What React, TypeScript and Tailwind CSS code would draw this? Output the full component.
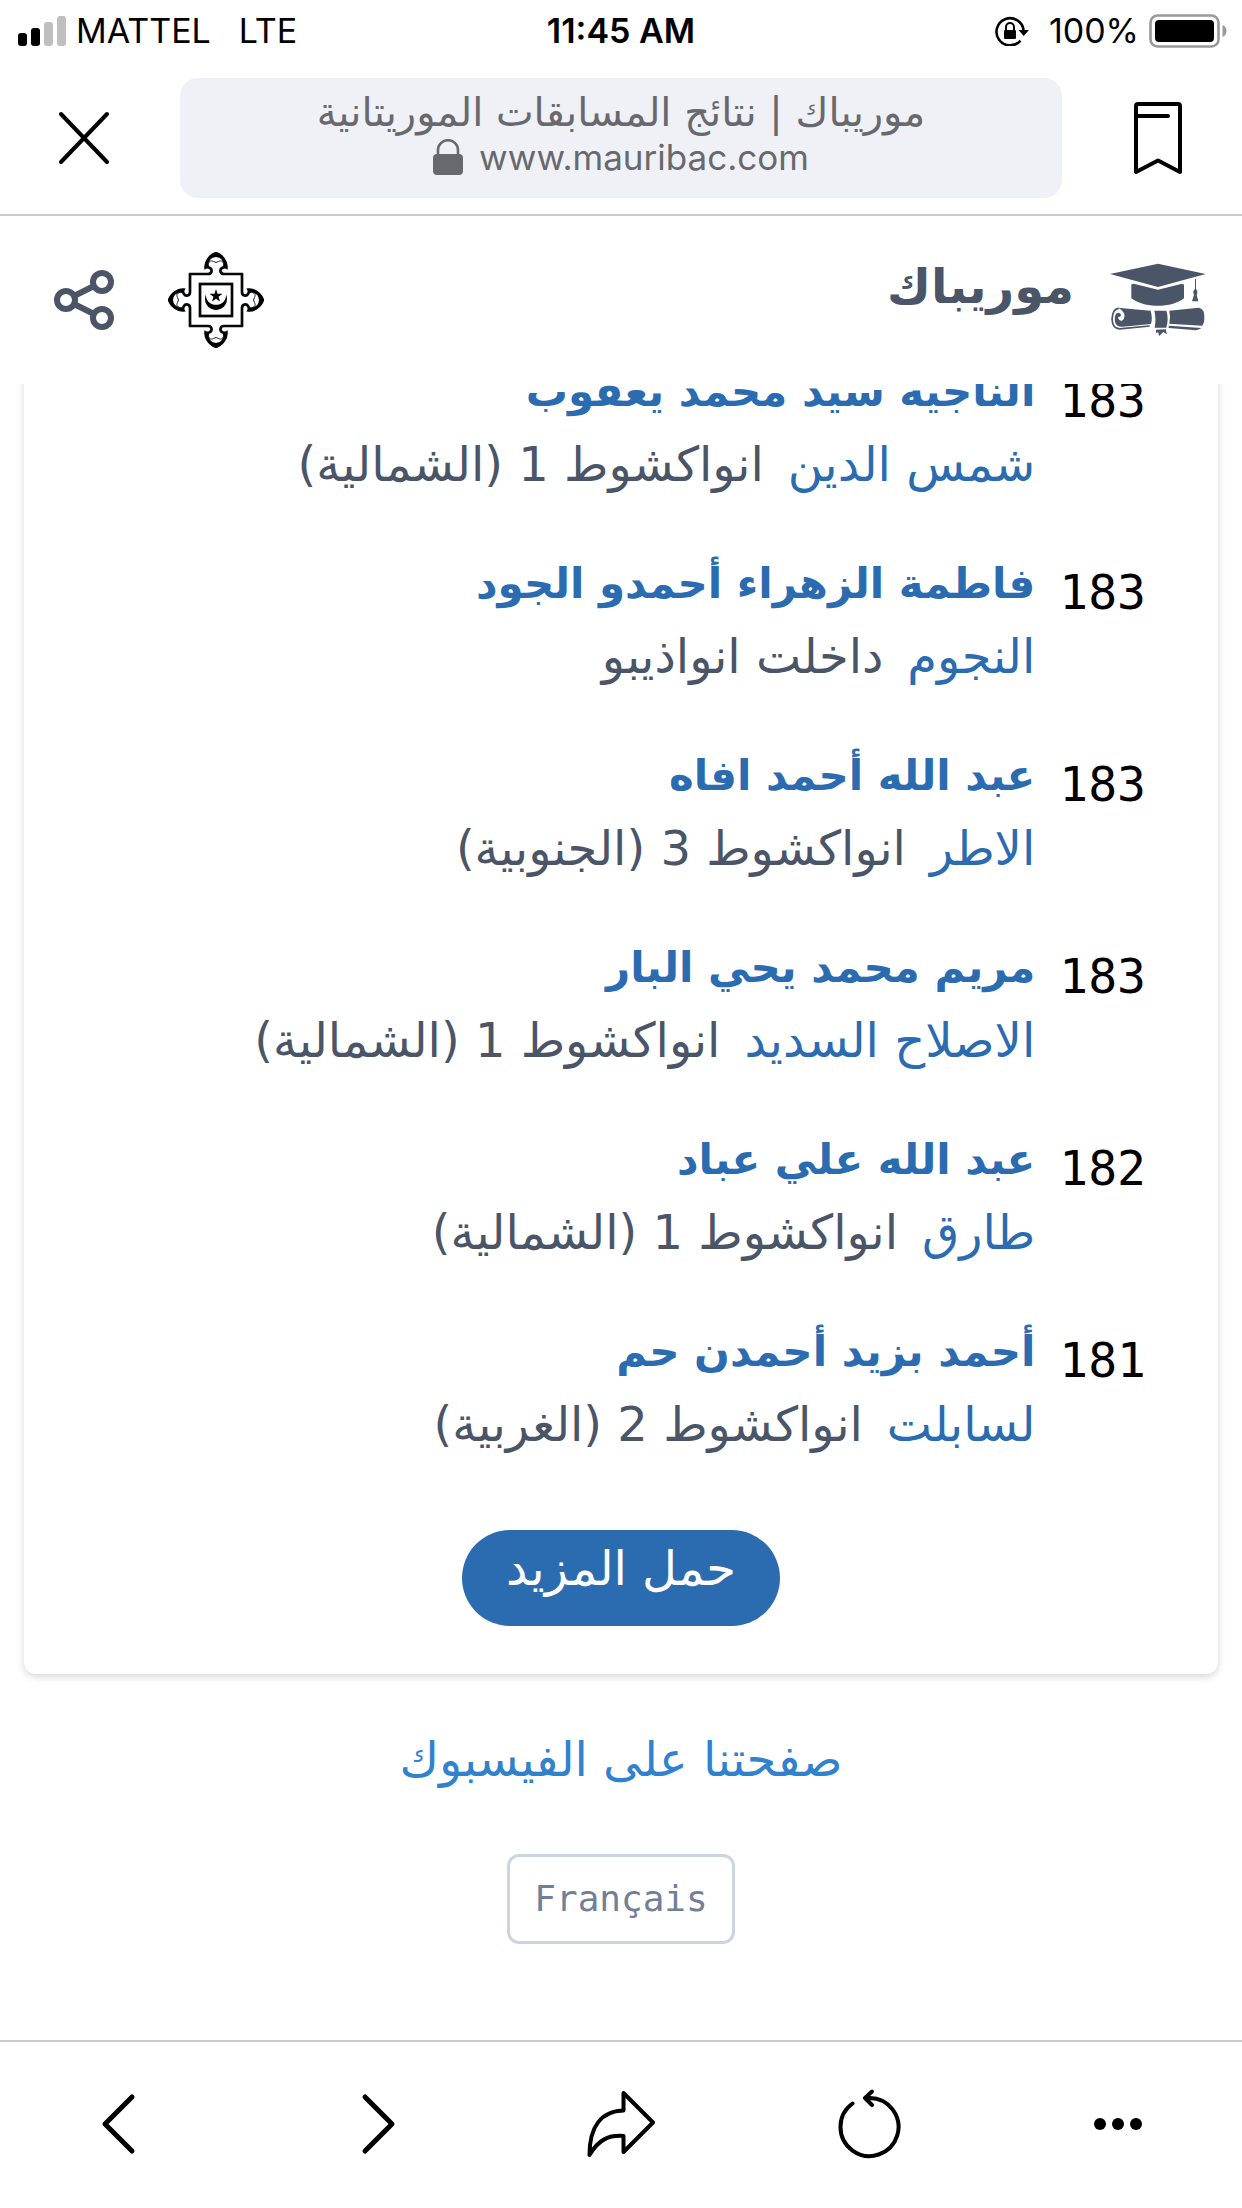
const results = [
  { score: 183, name: "الناجيه سيد محمد يعقوب", school: "شمس الدين", region: "انواكشوط 1 (الشمالية)" },
  { score: 183, name: "فاطمة الزهراء أحمدو الجود", school: "النجوم", region: "داخلت انواذيبو" },
  { score: 183, name: "عبد الله أحمد افاه", school: "الاطر", region: "انواكشوط 3 (الجنوبية)" },
  { score: 183, name: "مريم محمد يحي البار", school: "الاصلاح السديد", region: "انواكشوط 1 (الشمالية)" },
  { score: 182, name: "عبد الله علي عباد", school: "طارق", region: "انواكشوط 1 (الشمالية)" },
  { score: 181, name: "أحمد بزيد أحمدن حم", school: "لسابلت", region: "انواكشوط 2 (الغربية)" },
];

function StatusBar() {
  return (
    <div className="grid h-[62px] shrink-0 grid-cols-3 items-center px-[15px] text-[34px] leading-none text-black">
      <div className="flex items-center gap-[10px] pl-[3px]">
        <svg width="48" height="30" viewBox="0 0 48 30" aria-hidden="true">
          <rect x="0" y="17" width="9" height="13" rx="3" />
          <rect x="13" y="12" width="9" height="18" rx="3" />
          <rect x="26" y="6" width="9" height="24" rx="3" fill="#bfbfbf" />
          <rect x="39" y="0" width="9" height="30" rx="3" fill="#bfbfbf" />
        </svg>
        <span>MATTEL</span>
        <span className="pl-[18px]">LTE</span>
      </div>
      <div className="text-center font-semibold">11:45 AM</div>
      <div className="flex items-center justify-end">
        <svg width="34" height="30" viewBox="0 0 34 30" aria-hidden="true" className="mr-5">
          <path d="M25.5 24.6 A13.6 13.6 0 1 1 28.6 14" fill="none" stroke="#000" strokeWidth="2.6" />
          <path d="M23.5 14 H34 L28.7 20Z" />
          <rect x="9" y="14" width="12" height="9" rx="1.2" />
          <path d="M11 14 V11 a4 4 0 0 1 8 0 V14" fill="none" stroke="#000" strokeWidth="2" />
        </svg>
        <span>100%</span>
        <svg width="78" height="34" viewBox="0 0 78 34" aria-hidden="true" className="ml-[10px]">
          <rect x="1.5" y="1.5" width="68" height="31" rx="7" fill="#fff" stroke="#999" strokeWidth="2.6" />
          <rect x="6" y="6" width="59" height="22" rx="4" />
          <path d="M73.500 11 Q77.500 12.500 77.500 17 T73.500 23Z" fill="#999" />
        </svg>
      </div>
    </div>
  );
}

function AddressBar() {
  return (
    <div className="flex h-[154px] shrink-0 items-start border-b-2 border-[#c8cbd0] pt-4">
      <button aria-label="إغلاق" className="flex h-[120px] w-[180px] items-center justify-center pr-3">
        <svg width="54" height="54" viewBox="0 0 54 54" fill="none" stroke="#000" strokeWidth="4" strokeLinecap="round">
          <path d="M4 3 L50 51 M50 3 L4 51" />
        </svg>
      </button>
      <div className="flex h-[120px] min-w-0 flex-1 flex-col items-center justify-center rounded-[18px] bg-[#f0f1f6] pb-2 text-[#68696e]">
        <div dir="rtl" className="font-['DejaVu_Sans',sans-serif] text-[40px] leading-[46px]">
          موريباك | نتائج المسابقات الموريتانية
        </div>
        <div className="flex items-center gap-4 text-[35px] leading-[44px]">
          <svg width="30" height="36" viewBox="0 0 30 36" aria-hidden="true">
            <rect y="15" width="30" height="21" rx="4" fill="currentColor" />
            <path d="M5 17 V11 a10 9.800 0 0 1 20 0 V17" fill="none" stroke="currentColor" strokeWidth="2.6" />
          </svg>
          www.mauribac.com
        </div>
      </div>
      <button aria-label="إشارة مرجعية" className="flex h-[120px] w-[180px] items-center justify-center pl-3">
        <svg width="50" height="74" viewBox="0 0 50 74" fill="none" stroke="#000" strokeWidth="4" strokeLinecap="round" strokeLinejoin="round">
          <path d="M3 5 Q3 3 5 3 H45 Q47 3 47 5 V71 L25 59.500 L3 71Z M4 15 H35" />
        </svg>
      </button>
    </div>
  );
}

const armPath =
  "M21 22 H40 C44 22 44.500 17.500 42 16 C40.500 15 38.500 15 37.600 15.500 C37 10 42 3 48 1.200 C54 3 59 10 58.400 15.500 C57.500 15 55.500 15 54 16 C51.500 17.500 52 22 56 22 H75";

function Emblem() {
  return (
    <svg width="96" height="96" viewBox="0 0 96 96" aria-hidden="true">
      {[0, 90, 180, 270].map((angle) => (
        <g key={angle} transform={`rotate(${angle} 48 48)`}>
          <path d={armPath} fill="none" stroke="#050708" strokeWidth="2.700" />
          <path d="M48 0 C42.500 2.500 39 6.500 37.500 11 L37 15 L41 15 Q39.500 6 48 5 Q56.500 6 55 15 L59 15 L58.500 11 C57 6.500 53.500 2.500 48 0Z" />
          <path d="M41 11 C41 8.500 44 8.500 45.500 9.500 L48 10.500 L50.500 9.500 C52 8.500 55 8.500 55 11" fill="none" stroke="#1a202c" strokeWidth="1" />
        </g>
      ))}
      <rect x="32" y="32" width="32" height="32" fill="none" stroke="#050708" strokeWidth="2.700" />
      <path d="M38.200 42 A11 11 0 1 0 57.800 42 A10 9 0 1 1 38.200 42Z" />
      <path d="M48 37 L49.500 41.800 H54.500 L50.500 44.800 L52 49.600 L48 46.700 L44 49.600 L45.500 44.800 L41.500 41.800 H46.500Z" />
    </svg>
  );
}

function CapIcon() {
  return (
    <svg width="96" height="74" viewBox="30 24 288 222" fill="#4a5568" aria-hidden="true">
      <path d="M174 26 L317 57 L174 96 L30 57Z" />
      <path d="M94 90 Q94 86 101 86 L174 104 L246 86 Q252 86 252 91 V130 C215 160 133 160 94 130Z" />
      <path d="M285 72 H288 V102 L292 108 V115 L290 119 L295 139 H276 L282 119 L280 115 V108 L285 102Z" />
      <path d="M54 158 Q100 163 152 167 Q158 188 153 207 L68 215 Q50 216 46 203 Q41 185 50 175 Q61 169 63 181 Q60 188 54 185 Q56 199 66 197 Q75 192 73 177 Q68 165 54 158Z" />
      <path d="M56 160 C37 162 34 190 38 205 Q43 224 66 221 L149 213" fill="none" stroke="#4a5568" strokeWidth="5" />
      <path d="M163 167 H199 Q207 191 199 218 H164 Q169 190 163 167Z" />
      <path d="M208 167 L296 158 Q314 160 313 189 Q313 206 306 212 L208 206 Q212 187 208 167Z" />
      <path d="M206 212 L304 219 Q296 227 280 225 L206 219Z" />
      <path d="M168 224 L197 223 L201 238 L190 231 L177 243 L175 232 L168 234Z" />
    </svg>
  );
}

function SiteHeader() {
  return (
    <header dir="rtl" className="flex h-[168px] shrink-0 items-center justify-between pr-9 pl-[54px] text-[#4a5568]">
      <div className="flex items-center gap-9">
        <CapIcon />
        <h1 className="pb-7 font-['DejaVu_Sans',sans-serif] text-[48px] leading-[60px] font-bold">موريباك</h1>
      </div>
      <div className="flex items-center gap-[54px]">
        <Emblem />
        <button aria-label="مشاركة">
          <svg width="60" height="60" viewBox="0 0 60 60" fill="none" stroke="currentColor" strokeWidth="6">
            <circle cx="12" cy="30" r="9" />
            <circle cx="48" cy="12" r="9" />
            <circle cx="48" cy="48" r="9" />
            <path d="M20 26 L40 16 M20 34 L40 44" />
          </svg>
        </button>
      </div>
    </header>
  );
}

function Results() {
  return (
    <section dir="rtl" className="mx-6 rounded-xl px-[72px] pb-12 shadow-[0_3px_9px_rgba(0,0,0,0.1),0_3px_6px_rgba(0,0,0,0.06)]">
      <ul>
        {results.map((r) => (
          <li key={r.name} className="flex gap-6 pb-12">
            <span className="pt-2 font-['DejaVu_Sans_Mono',monospace] text-[48px] leading-[72px] text-black">{r.score}</span>
            <div className="font-['DejaVu_Sans',sans-serif] leading-[72px]">
              <a href="#" className="block text-[42px] leading-[72px] font-bold text-[#2b6cb0]">{r.name}</a>
              <div className="flex gap-6 text-[48px] leading-[72px]">
                <a href="#" className="text-[#2b6cb0]">{r.school}</a>
                <span className="text-[#4a5568]">{r.region}</span>
              </div>
            </div>
          </li>
        ))}
      </ul>
      <div className="flex justify-center pt-[22px]">
        <button className="h-24 rounded-full bg-[#2b6cb0] px-11 pb-5 font-['DejaVu_Sans',sans-serif] text-[48px] leading-[72px] text-white">حمل المزيد</button>
      </div>
    </section>
  );
}

function Toolbar() {
  const cell = "flex flex-1 items-center justify-center";
  return (
    <nav className="flex h-[168px] shrink-0 border-t-2 border-[#c8cbd0] pb-[2px]" aria-label="أدوات المتصفح">
      <button className={cell} aria-label="رجوع">
        <svg width="50" height="62" viewBox="0 0 50 62" fill="none" stroke="#000" strokeWidth="5" strokeLinecap="round" strokeLinejoin="round">
          <path d="M33 4 L6 31 L33 58" />
        </svg>
      </button>
      <button className={cell} aria-label="تقدم">
        <svg width="50" height="62" viewBox="0 0 50 62" fill="none" stroke="#000" strokeWidth="5" strokeLinecap="round" strokeLinejoin="round">
          <path d="M17 4 L44 31 L17 58" />
        </svg>
      </button>
      <button className={cell} aria-label="مشاركة الصفحة">
        <svg width="68" height="68" viewBox="0 0 68 68" fill="none" stroke="#000" strokeWidth="4" strokeLinecap="round" strokeLinejoin="round">
          <path d="M36.500 3 L66 32.500 L36.500 62 V46 C22 45 12 49 2.500 65 C2.500 37 14 21 36.500 20.500Z" />
        </svg>
      </button>
      <button className={cell} aria-label="إعادة التحميل">
        <svg width="64" height="72" viewBox="0 0 64 72" fill="none" stroke="#000" strokeWidth="4" strokeLinecap="round" strokeLinejoin="round">
          <path d="M15.500 15.500 A29 29 0 1 0 32 10 M28 10 H34 M35 3.500 L28 10 L35 17" />
        </svg>
      </button>
      <button className={cell} aria-label="المزيد">
        <svg width="48" height="12" viewBox="0 0 48 12">
          <circle cx="6" cy="6" r="6" />
          <circle cx="24" cy="6" r="6" />
          <circle cx="42" cy="6" r="6" />
        </svg>
      </button>
    </nav>
  );
}

export default function App() {
  return (
    <div className="flex h-screen flex-col bg-white font-['Inter',sans-serif]">
      <StatusBar />
      <AddressBar />
      <SiteHeader />
      <main className="flex min-h-0 flex-1 flex-col justify-end overflow-hidden pb-24">
        <Results />
        <div className="flex flex-col items-center gap-[50px] pt-10">
          <a href="#" className="font-['DejaVu_Sans',sans-serif] text-[48px] leading-[90px] text-[#3182ce]">صفحتنا على الفيسبوك</a>
          <button className="h-[90px] rounded-xl border-[3px] border-[#cbd5e0] px-6 font-['DejaVu_Sans_Mono',monospace] text-[36px] text-[#718096]">Français</button>
        </div>
      </main>
      <Toolbar />
    </div>
  );
}
